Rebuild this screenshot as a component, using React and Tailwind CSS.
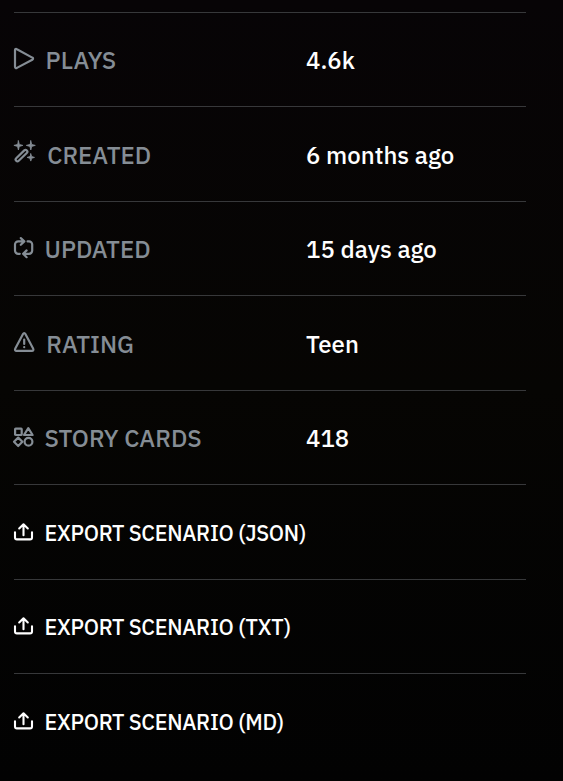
import React from "react";

const ICONS = {
  play: <path d="M1 3.2v16.6c0 1.2.9 1.6 1.9 1.1l15.4-8.2c1-.6 1-1.6 0-2.1L2.9 2.2C1.9 1.6 1 2.1 1 3.2Z" strokeWidth="2.2" />,
  wand: (
    <>
      <rect x="-7.4" y="-1.8" width="14.8" height="3.6" rx="1.8" transform="translate(7.5 13.6) rotate(-44)" strokeWidth="2.2" />
      <path
        d="M4.4-1.2 5.3 2.4 8.9 3.4 5.3 4.4 4.4 8 3.5 4.4-.1 3.4 3.5 2.4ZM16.8-1.2l.9 3.6 3.6 1-3.6 1-.9 3.6-.9-3.6-3.6-1 3.6-1ZM16.8 11.8l.9 2.7 2.8.9-2.8.9-.9 2.8-.9-2.8-2.8-.9 2.8-.9Z"
        fill="currentColor"
        strokeWidth="0.8"
      />
    </>
  ),
  repeat: (
    <path
      d="M5.8 17.8H4.2A3.2 3.2 0 0 1 1 14.6V8.6a3.2 3.2 0 0 1 3.2-3.2h5.6M6.8 2.1l3.5 3.3-3.5 3.4M13.6 5.4h1.4a3.2 3.2 0 0 1 3.2 3.2v6a3.2 3.2 0 0 1-3.2 3.2H9.2M12.6 14.4l-3.5 3.4 3.5 3.4"
      strokeWidth="2.2"
    />
  ),
  warning: (
    <>
      <path d="M9 3.1 1.3 17.6c-.7 1.3-.2 2.2 1.2 2.2h15.4c1.4 0 1.9-.9 1.2-2.2L11.4 3.1c-.7-1.3-1.7-1.3-2.4 0Z" strokeWidth="2.2" />
      <path d="M10.2 8.6v4.4M10.2 16v.2" strokeWidth="2.2" />
    </>
  ),
  shapes: (
    <g strokeWidth="2.2">
      <rect x="1.1" y="3.6" width="6.6" height="6.4" rx="0.6" />
      <path d="M14.3 3.2 18.6 10h-8.6Z" />
      <path d="M4.2 12.6 8.4 16.8l-4.2 4.2L0 16.8Z" />
      <circle cx="14.5" cy="16.8" r="3.9" />
    </g>
  ),
  upload: <path d="M1 12.2v5.2a2 2 0 0 0 2 2h13a2 2 0 0 0 2-2v-5.2M9.5 15.2V4.4M5.2 8.5l4.3-4.2 4.3 4.2" strokeWidth="2.1" />,
};

function Icon({ name }) {
  return (
    <svg
      className="h-6 w-6 shrink-0 overflow-visible"
      viewBox="0 0 24 24"
      fill="none"
      stroke="currentColor"
      strokeWidth="2"
      strokeLinecap="round"
      strokeLinejoin="round"
      aria-hidden="true"
    >
      {ICONS[name]}
    </svg>
  );
}

const STATS = [
  { icon: "play", label: "PLAYS", value: "4.6k", labelClass: "pl-[7.6px]" },
  { icon: "wand", label: "CREATED", value: "6 months ago", labelClass: "pl-[9.2px]" },
  { icon: "repeat", label: "UPDATED", value: "15 days ago", labelClass: "pl-[6.5px]" },
  { icon: "warning", label: "RATING", value: "Teen", labelClass: "pl-[8.3px]" },
  { icon: "shapes", label: "STORY CARDS", value: "418", labelClass: "pl-[6.6px]" },
];

const EXPORTS = ["EXPORT SCENARIO (JSON)", "EXPORT SCENARIO (TXT)", "EXPORT SCENARIO (MD)"];

export default function App() {
  return (
    <main className="h-[781px] w-[563px] overflow-hidden bg-[#050304] bg-linear-to-b from-[#070406] via-[#060503] to-[#020202] pt-[11.7px] pr-[37px] pl-3.5 font-['IBM_Plex_Sans','Noto_Sans',sans-serif] font-medium whitespace-nowrap text-white">
      {STATS.map((s) => (
        <div key={s.label} className="flex h-[94.5px] items-center border-t border-[#37383a]">
          <div className="flex w-[292px] items-center text-[#858d95]">
            <Icon name={s.icon} />
            <span className={`pt-0.5 text-2xl ${s.labelClass}`}>{s.label}</span>
          </div>
          <span className="pt-0.5 text-2xl">{s.value}</span>
        </div>
      ))}
      {EXPORTS.map((label) => (
        <button key={label} className="flex h-[94.5px] w-full items-center border-t border-[#37383a]">
          <Icon name="upload" />
          <span className="pt-0.5 pl-[6.6px] text-[21.5px] tracking-[-0.3px]">{label}</span>
        </button>
      ))}
    </main>
  );
}
